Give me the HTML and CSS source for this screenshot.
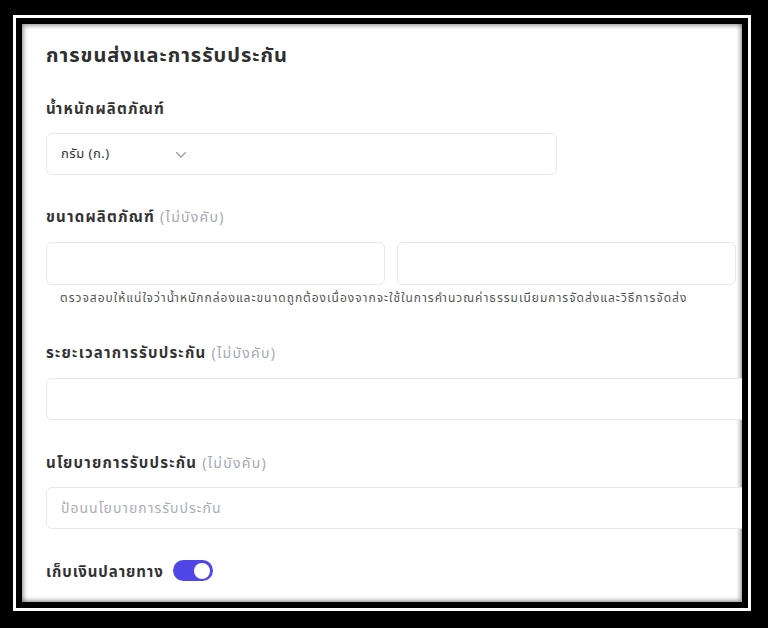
FILE: index.html
```html
<!DOCTYPE html>
<html lang="th">
<head>
    <meta charset="UTF-8">
    <meta name="viewport" content="width=device-width, initial-scale=1.0">
    <title>การขนส่งและการรับประกัน</title>
    <link rel="stylesheet" href="styles.css">
</head>
<body>

    <div class="mat">
        <div class="card">
            <h2 class="card-title">การขนส่งและการรับประกัน</h2>

            <div class="field">
                <label class="field-label">น้ำหนักผลิตภัณฑ์</label>
                <div class="input select-box">
                    <span class="select-value">กรัม (ก.)</span>
                    <svg class="chevron" width="12" height="8" viewBox="0 0 12 8">
                        <path d="M1.5 1.5 L6 6 L10.5 1.5" fill="none" stroke="#9aa0ab" stroke-width="1.3" stroke-linecap="round" stroke-linejoin="round"/>
                    </svg>
                </div>
            </div>

            <div class="field">
                <label class="field-label">ขนาดผลิตภัณฑ์ <span class="optional">(ไม่บังคับ)</span></label>
                <div class="size-row">
                    <div class="input"></div>
                    <div class="input"></div>
                </div>
                <p class="help">ตรวจสอบให้แน่ใจว่าน้ำหนักกล่องและขนาดถูกต้องเนื่องจากจะใช้ในการคำนวณค่าธรรมเนียมการจัดส่งและวิธีการจัดส่ง</p>
            </div>

            <div class="field warranty">
                <label class="field-label">ระยะเวลาการรับประกัน <span class="optional">(ไม่บังคับ)</span></label>
                <div class="input wide"></div>
            </div>

            <div class="field policy">
                <label class="field-label">นโยบายการรับประกัน <span class="optional">(ไม่บังคับ)</span></label>
                <div class="input wide">
                    <span class="placeholder">ป้อนนโยบายการรับประกัน</span>
                </div>
            </div>

            <div class="toggle-row">
                <span class="field-label">เก็บเงินปลายทาง</span>
                <span class="toggle"><span class="knob"></span></span>
            </div>
        </div>
    </div>

</body>
</html>
```

FILE: styles.css
```css
body {
    margin: 0;
    padding: 15px 17px 17px 13px;
    background-color: #000;
    font-family: "Noto Sans", "Noto Sans Thai", Tahoma, sans-serif;
    color: #333;
}

.mat {
    background-color: #fff;
    padding: 3px;
}

.card {
    height: 561px;
    border: 6px solid #000;
    background-color: #fff;
    box-shadow: inset 2px 2px 4px rgba(0, 0, 0, 0.35), inset -2px -2px 4px rgba(0, 0, 0, 0.35);
    padding: 17px 0 0 24px;
    overflow: hidden;
    display: flex;
    flex-direction: column;
}

.card-title {
    margin: 0 0 29px;
    font-size: 20px;
    line-height: 28px;
    letter-spacing: 1px;
    font-weight: bold;
    color: #2f2f2f;
}

.field {
    display: flex;
    flex-direction: column;
    margin-bottom: 31px;
}

.field-label {
    font-size: 15px;
    line-height: 20px;
    letter-spacing: 1.2px;
    font-weight: bold;
    color: #333;
    margin-bottom: 15px;
}

.optional {
    font-weight: normal;
    color: #a3a8b3;
    font-size: 14px;
    letter-spacing: 1.3px;
}

.input {
    height: 42px;
    border: 1px solid #e6e8ef;
    border-radius: 6px;
    box-sizing: border-box;
    background-color: #fff;
    display: flex;
    align-items: center;
    padding-left: 14px;
}

.select-box {
    width: 511px;
    font-size: 13px;
    letter-spacing: 0.5px;
    color: #333;
}

.select-value {
    width: 114px;
}

.chevron {
    margin-top: 1px;
}

.size-row {
    display: flex;
    gap: 12px;
    width: 690px;
}

.size-row .input {
    flex: 1;
    height: 43px;
}

.help {
    margin: 5px 0 0 14px;
    font-size: 12px;
    line-height: 16px;
    letter-spacing: 1px;
    color: #555;
    white-space: nowrap;
}

.wide {
    width: 740px;
}

.placeholder {
    font-size: 14px;
    letter-spacing: 1px;
    color: #a9adb7;
}

.warranty {
    margin-top: 5px;
    margin-bottom: 32px;
}

.policy .field-label {
    margin-bottom: 14px;
}

.toggle-row {
    display: flex;
    align-items: center;
    gap: 9px;
    margin-top: 0;
}

.toggle-row .field-label {
    margin-bottom: 0;
    letter-spacing: 0.9px;
}

.toggle {
    width: 40px;
    height: 21px;
    border-radius: 11px;
    background-color: #4f46e5;
    display: flex;
    align-items: center;
    justify-content: flex-end;
    padding: 0 3px;
    box-sizing: border-box;
}

.knob {
    width: 16px;
    height: 16px;
    border-radius: 50%;
    background-color: #fff;
}
```
